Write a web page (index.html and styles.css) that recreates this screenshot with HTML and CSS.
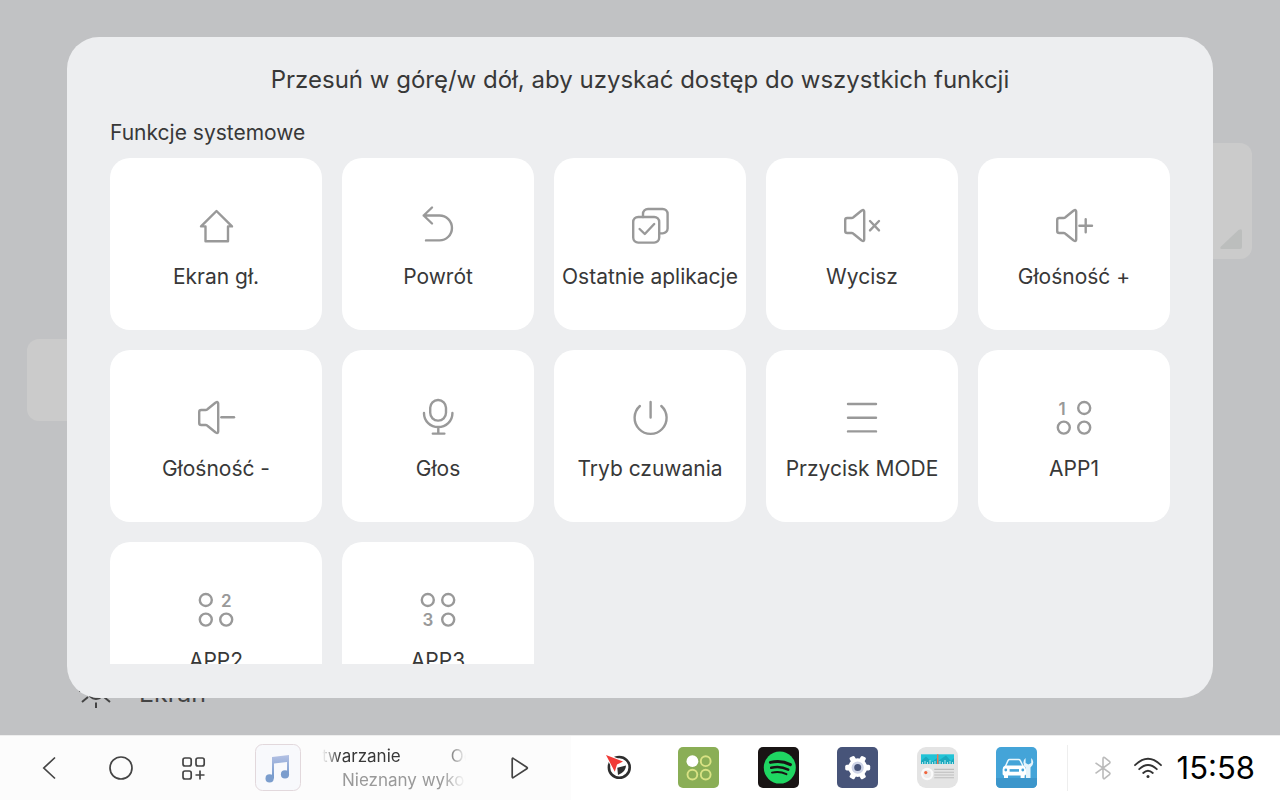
FILE: index.html
```html
<!DOCTYPE html>
<html lang="pl">
<head>
<meta charset="utf-8">
<title>Funkcje systemowe</title>
<link rel="stylesheet" href="styles.css">
</head>
<body>
<svg class="defs" width="0" height="0" aria-hidden="true">
  <defs>
    <symbol id="speaker" viewBox="0 0 48 48">
      <path d="M9.2 16H13.6Q14.6 16 15.4 15.3L23.4 8.7Q26.2 7 26.2 9.6V37.4Q26.2 40 23.4 38.3L15.4 31.7Q14.6 31 13.6 31H9.2Q7.2 31 7.2 29V18Q7.2 16 9.2 16Z"/>
    </symbol>
    <linearGradient id="note" x1="0" y1="0" x2="0" y2="1">
      <stop offset="0" stop-color="#b4c1e4"/>
      <stop offset="1" stop-color="#7096ca"/>
    </linearGradient>
  </defs>
</svg>

<main class="stage">
  <div class="panel panel-right"><svg class="corner" viewBox="0 0 22 20"><path d="M1 17.5 18.5 1Q22-1 22 2V18Q22 20 20 20H2Q-1 20 1 17.5Z"/></svg></div>
  <div class="panel panel-left"></div>
  <div class="setting">
    <svg class="sun" viewBox="0 0 32 32"><circle cx="16" cy="14" r="8"/><path d="M16 25.5v5.5M8 20l-6 5M24 20l6 5M16 2v-5M8 8 2 3M24 8l6-5M4 14H-1M28 14h5"/></svg>
    <span>Ekran</span>
  </div>

  <section class="dialog" role="dialog" aria-labelledby="title">
    <h1 id="title">Przesuń w górę/w dół, aby uzyskać dostęp do wszystkich funkcji</h1>
    <h2>Funkcje systemowe</h2>
    <div class="tiles">
      <button class="tile"><svg viewBox="0 0 48 48"><path d="M24.5 9 9 24.4H13.5V39.2H36V24.4H40Z"/></svg><span>Ekran gł.</span></button>
      <button class="tile"><svg viewBox="0 0 48 48"><path d="M18 5.5 9.7 13.5 18 21.5M9.7 13.5H25.5a12.4 12.4 0 0 1 0 24.9H12"/></svg><span>Powrót</span></button>
      <button class="tile"><svg viewBox="0 0 48 48"><rect x="7.2" y="15" width="26" height="25.6" rx="5"/><path d="M17 15v-3a5 5 0 0 1 5-5H36.6a5 5 0 0 1 5 5V26.4a5 5 0 0 1-5 5H33.4M13.6 27l5.2 5 9.4-10"/></svg><span>Ostatnie aplikacje</span></button>
      <button class="tile"><svg viewBox="0 0 48 48"><use href="#speaker"/><path d="M32 19l9 9.4M41 19 32 28.4"/></svg><span>Wycisz</span></button>
      <button class="tile"><svg viewBox="0 0 48 48"><use href="#speaker"/><path d="M29.4 23.7H42M35.7 17.2v13"/></svg><span>Głośność +</span></button>
      <button class="tile"><svg viewBox="0 0 48 48"><use href="#speaker"/><path d="M29.4 23.2H42"/></svg><span>Głośność -</span></button>
      <button class="tile"><svg viewBox="0 0 48 48"><rect x="16.2" y="6" width="15.8" height="20.6" rx="7.8"/><path d="M10 19v.4a14.2 13.6 0 0 0 28.4 0V19M24.3 33v6.2M18.8 39.6H30.4"/></svg><span>Głos</span></button>
      <button class="tile"><svg viewBox="0 0 48 48"><path d="M13.9 12a16 16 0 1 0 21.4 0M24.6 8v15.6"/></svg><span>Tryb czuwania</span></button>
      <button class="tile"><svg viewBox="0 0 48 48"><path d="M10 10H38M10 23.7H38M10 37.4H38"/></svg><span>Przycisk MODE</span></button>
      <button class="tile"><svg viewBox="0 0 48 48"><circle cx="34.2" cy="14" r="6"/><circle cx="13.8" cy="33.6" r="6"/><circle cx="34.2" cy="33.6" r="6"/><text x="12" y="20.5">1</text></svg><span>APP1</span></button>
      <button class="tile"><svg viewBox="0 0 48 48"><circle cx="13.8" cy="14" r="6"/><circle cx="13.8" cy="33.6" r="6"/><circle cx="34.2" cy="33.6" r="6"/><text x="34.4" y="20.5">2</text></svg><span>APP2</span></button>
      <button class="tile"><svg viewBox="0 0 48 48"><circle cx="13.8" cy="14" r="6"/><circle cx="34.2" cy="14" r="6"/><circle cx="34.2" cy="33.6" r="6"/><text x="13.8" y="40">3</text></svg><span>APP3</span></button>
    </div>
  </section>
</main>

<footer class="bar">
  <div class="controls">
    <button class="key" aria-label="Wstecz"><svg viewBox="0 0 28 28"><path d="M20 3.5 8.8 14 20 24.5"/></svg></button>
    <button class="key" aria-label="Ekran główny"><svg viewBox="0 0 28 28"><circle cx="14" cy="14" r="11"/></svg></button>
    <button class="key" aria-label="Aplikacje"><svg viewBox="0 0 28 28"><rect x="4" y="4" width="8.2" height="8" rx="2"/><rect x="17" y="4" width="8.2" height="8" rx="2"/><rect x="4" y="17" width="8.2" height="8" rx="2"/><path d="M21 16.5v9M16.5 21h9"/></svg></button>
    <svg class="cover" viewBox="0 0 46 47"><rect x=".5" y=".5" width="45" height="46" rx="7" fill="#f8f9fc" stroke="#e2d8dc"/><path d="M17 13 34 11V30.5H32V18L19 19.6V34.5H17Z" fill="url(#note)"/><circle cx="14.6" cy="34.4" r="4.1" fill="#7b9dcd"/><circle cx="30" cy="30.4" r="4.1" fill="#7b9dcd"/></svg>
    <div class="track">
      <div class="song"><span>twarzanie</span><span>Od</span></div>
      <div class="artist">Nieznany wykonawca</div>
    </div>
    <button class="key" aria-label="Odtwórz"><svg viewBox="0 0 28 28"><path d="M7.2 5.2Q7.2 3.6 8.6 4.6L21.8 13.2Q23 14 21.8 14.8L8.6 23.4Q7.2 24.4 7.2 22.8Z"/></svg></button>
  </div>

  <nav class="apps">
    <button aria-label="Nawigacja"><svg viewBox="0 0 41 41"><circle cx="20.3" cy="20.4" r="10.4" fill="none" stroke="#2e2e2e" stroke-width="2.6"/><path d="M5 6 27 14.5 20 18.5 16.5 28Z" fill="#fff"/><path d="M18.3 20.8 27 18.6Q27 25 19 28Z" fill="#2e2e2e"/><path d="M7 8 24 14.6 18 17.6 15.8 24.8Z" fill="#f03a36"/></svg></button>
    <button aria-label="Menu aplikacji"><svg viewBox="0 0 41 41"><rect width="41" height="41" rx="5" fill="#8aae56"/><circle cx="14.4" cy="14.2" r="5.9" fill="#fff"/><g fill="none" stroke="#d9e284" stroke-width="1.9"><circle cx="27.7" cy="14.2" r="4.9"/><circle cx="14.4" cy="27.6" r="4.9"/><circle cx="27.7" cy="27.6" r="4.9"/></g></svg></button>
    <button aria-label="Spotify"><svg viewBox="0 0 41 41"><rect width="41" height="41" rx="5" fill="#191414"/><circle cx="21.8" cy="20.6" r="16" fill="#1fd662"/><g fill="none" stroke="#191414" stroke-linecap="round"><path d="M12.4 15.4Q23 12.6 32.4 17.6" stroke-width="3"/><path d="M13.2 20.8Q22 18.4 30.2 22.6" stroke-width="2.5"/><path d="M14 25.6Q21.6 23.6 28.4 27.2" stroke-width="2"/></g></svg></button>
    <button aria-label="Ustawienia"><svg viewBox="0 0 41 41"><rect width="41" height="41" rx="5" fill="#475479"/><g fill="#fff"><circle cx="20.7" cy="20.6" r="9.4"/><rect x="8.2" y="17.8" width="25" height="5.6" rx="1.6"/><rect x="8.2" y="17.8" width="25" height="5.6" rx="1.6" transform="rotate(60 20.7 20.6)"/><rect x="8.2" y="17.8" width="25" height="5.6" rx="1.6" transform="rotate(120 20.7 20.6)"/></g><circle cx="20.7" cy="20.6" r="4.8" fill="#475479" stroke="#cdd3e6" stroke-width="2.6"/></svg></button>
    <button aria-label="Radio"><svg viewBox="0 0 41 41"><rect width="41" height="41" rx="9" fill="#e4e4e4"/><rect x="4" y="7.3" width="33" height="9.7" fill="#22c3d6"/><path d="M4 14 9 9.5 15 15 20 11V17H4ZM21 14 29 8.5 34 14 37 11V17H21Z" fill="#1aa9be"/><path d="M5.5 17v-2M8 17v-3M10.5 17v-2M13 17v-4M15.5 17v-2M18 17v-3M23 17v-3M25.5 17v-2M28 17v-4M30.5 17v-2M33 17v-3M35.5 17v-2" stroke="#d9f6f8" stroke-width=".8"/><path d="M20.7 7.3V17" stroke="#f2734e" stroke-width="1.4"/><circle cx="10.2" cy="27" r="6.2" fill="#fafafa"/><circle cx="10.2" cy="27" r="4" fill="#ececec"/><circle cx="8.8" cy="25.6" r="1.6" fill="#f0643c"/><path d="M17.3 22.4H37M17.3 25.2H37M17.3 28H37M17.3 30.8H37" stroke="#bdbdbd" stroke-width="1.1"/></svg></button>
    <button aria-label="Samochód"><svg viewBox="0 0 41 41"><rect width="41" height="41" rx="5" fill="#44a4d8"/><path d="M0 31H41V36Q41 41 36 41H5Q0 41 0 36Z" fill="#3c96cb"/><path d="M30 20.5V31H34.5V20.5Q37.4 18.5 37.2 15 37 12.4 35.2 11V16L32.3 17.4 29.6 16V11Q27.4 12.6 27.4 15.4 27.4 19 30 20.5Z" fill="#e6f4fb"/><path d="M9.6 19 12 13.6Q12.5 12.6 13.6 12.6H22.6Q23.8 12.6 24.3 13.6L27 19" fill="none" stroke="#e9f6fc" stroke-width="1.5"/><path d="M9 18.4H27.4Q30 19.4 30 22.4V27Q30 28.4 28.6 28.4V31H24.6V28.4H12V31H8V28.4Q6.6 28.4 6.6 27V22.4Q6.6 19.4 9 18.4Z" fill="#fff"/><path d="M13.6 23.4H23" stroke="#44a4d8" stroke-width="2.6"/><circle cx="9.8" cy="23" r="1.4" fill="#44a4d8"/><circle cx="26.8" cy="23" r="1.4" fill="#44a4d8"/></svg></button>
  </nav>

  <div class="status">
    <svg class="bluetooth" viewBox="0 0 18 24"><path d="M1.5 6.8 9 12 1.5 17.4M9 12 15.4 16.6Q16.6 17.6 15.4 18.6L11 22.2Q9 23.4 9 21V3Q9 .6 11 1.8L15.4 5.4Q16.6 6.4 15.4 7.4L9 12"/></svg>
    <svg class="wifi" viewBox="0 0 28 22"><path d="M1 8.2Q14-4.6 27 8.2M5.2 12.2Q14 3.8 22.8 12.2M9.2 16Q14 11.4 18.8 16"/><circle cx="14" cy="19.6" r="1.5"/></svg>
    <time>15:58</time>
  </div>
</footer>
</body>
</html>
```
FILE: styles.css
```css
* {
  box-sizing: border-box;
}

body {
  margin: 0;
  height: 100vh;
  display: flex;
  flex-direction: column;
  overflow: hidden;
  background: #fff;
  color: #383838;
  font-family: Inter, "Noto Sans", sans-serif;
}

button {
  padding: 0;
  border: 0;
  background: none;
  color: inherit;
  font: inherit;
}

svg {
  display: block;
  flex: none;
}

.defs {
  position: absolute;
}

/* Dimmed settings page behind the dialog */
.stage {
  position: relative;
  flex: 1;
  min-height: 0;
  display: flex;
  flex-direction: column;
  overflow: hidden;
  background: #c1c2c4;
}

.panel {
  flex: none;
  display: flex;
  border-radius: 12px;
  background: #cbcbcb;
}

.panel-right {
  width: 40%;
  height: 116px;
  margin: 143px 28px 0 auto;
  padding: 10px;
  align-items: flex-end;
  justify-content: flex-end;
}

.corner {
  width: 22px;
  height: 20px;
  fill: #bcbebd;
}

.panel-left {
  width: 40%;
  height: 82px;
  margin: 80px 0 0 27px;
}

.setting {
  display: flex;
  align-items: center;
  gap: 27px;
  margin: 256px 0 0 80px;
  color: #444;
  font-size: 25px;
  line-height: 32px;
}

.sun {
  width: 32px;
  height: 32px;
  fill: none;
  stroke: #444;
  stroke-width: 2;
  overflow: visible;
}

.dialog {
  position: absolute;
  inset: 37px 67px;
  display: flex;
  flex-direction: column;
  padding: 28px 43px 34px;
  border-radius: 32px;
  background: #edeef0;
}

h1,
h2 {
  margin: 0;
  font-weight: 400;
  line-height: 30px;
}

h1 {
  font-size: 24px;
  text-align: center;
}

h2 {
  margin: 23px 0 10px;
  font-size: 21px;
}

.tiles {
  flex: 1;
  min-height: 0;
  display: grid;
  grid-template-columns: 212fr repeat(4, 192fr);
  grid-auto-rows: 172px;
  gap: 20px;
  overflow: auto;
  scrollbar-width: none;
}

.tile {
  min-width: 0;
  display: flex;
  flex-direction: column;
  align-items: center;
  gap: 12px;
  padding-top: 44px;
  border-radius: 20px;
  background: #fff;
  font-size: 21px;
  line-height: 30px;
  white-space: nowrap;
}

.tile svg {
  width: 48px;
  height: 48px;
  fill: none;
  stroke: #999;
  stroke-width: 2.4;
  stroke-linecap: round;
  stroke-linejoin: round;
}

.tile text {
  fill: #999;
  stroke: none;
  font-size: 17px;
  font-weight: 600;
  text-anchor: middle;
}

/* Bottom bar */
.bar {
  flex: none;
  height: 65px;
  display: grid;
  grid-template-columns: 571fr 496fr 213fr;
  box-shadow: inset 0 1px #eee;
}

.controls {
  min-width: 0;
  display: flex;
  align-items: center;
  padding-left: 13px;
  background: #fcfcfc;
  box-shadow: inset 0 1px #eee;
}

.key {
  width: 72px;
  height: 64px;
  display: flex;
  align-items: center;
  justify-content: center;
}

.key svg {
  width: 28px;
  height: 28px;
  fill: none;
  stroke: #444;
  stroke-width: 1.7;
}

.cover {
  width: 46px;
  height: 47px;
  margin: 0 21px 0 26px;
}

.track {
  width: 144px;
  margin-right: 17px;
  overflow: hidden;
  font-size: 17px;
  line-height: 24px;
  white-space: nowrap;
  mask-image: linear-gradient(to right, transparent, #000 18px, #000 120px, transparent);
}

.song {
  display: flex;
  gap: 50px;
}

.artist {
  padding-left: 20px;
  color: #999;
}

.apps {
  display: flex;
  align-items: center;
  justify-content: space-between;
  padding: 0 30px 0 28px;
}

.apps svg {
  width: 41px;
  height: 41px;
}

.status {
  display: flex;
  align-items: center;
  padding: 0 25px 0 27px;
  background: linear-gradient(#eee, #eee) left center / 1px 46px no-repeat;
}

.bluetooth {
  width: 18px;
  height: 24px;
  fill: none;
  stroke: #bbb;
  stroke-width: 1.6;
}

.wifi {
  width: 28px;
  height: 22px;
  margin: 0 auto 0 22px;
  fill: none;
  stroke: #333;
  stroke-width: 1.8;
  stroke-linecap: round;
}

.wifi circle {
  fill: #333;
  stroke: none;
}

time {
  color: #000;
  font-size: 31px;
  line-height: 36px;
}
```
